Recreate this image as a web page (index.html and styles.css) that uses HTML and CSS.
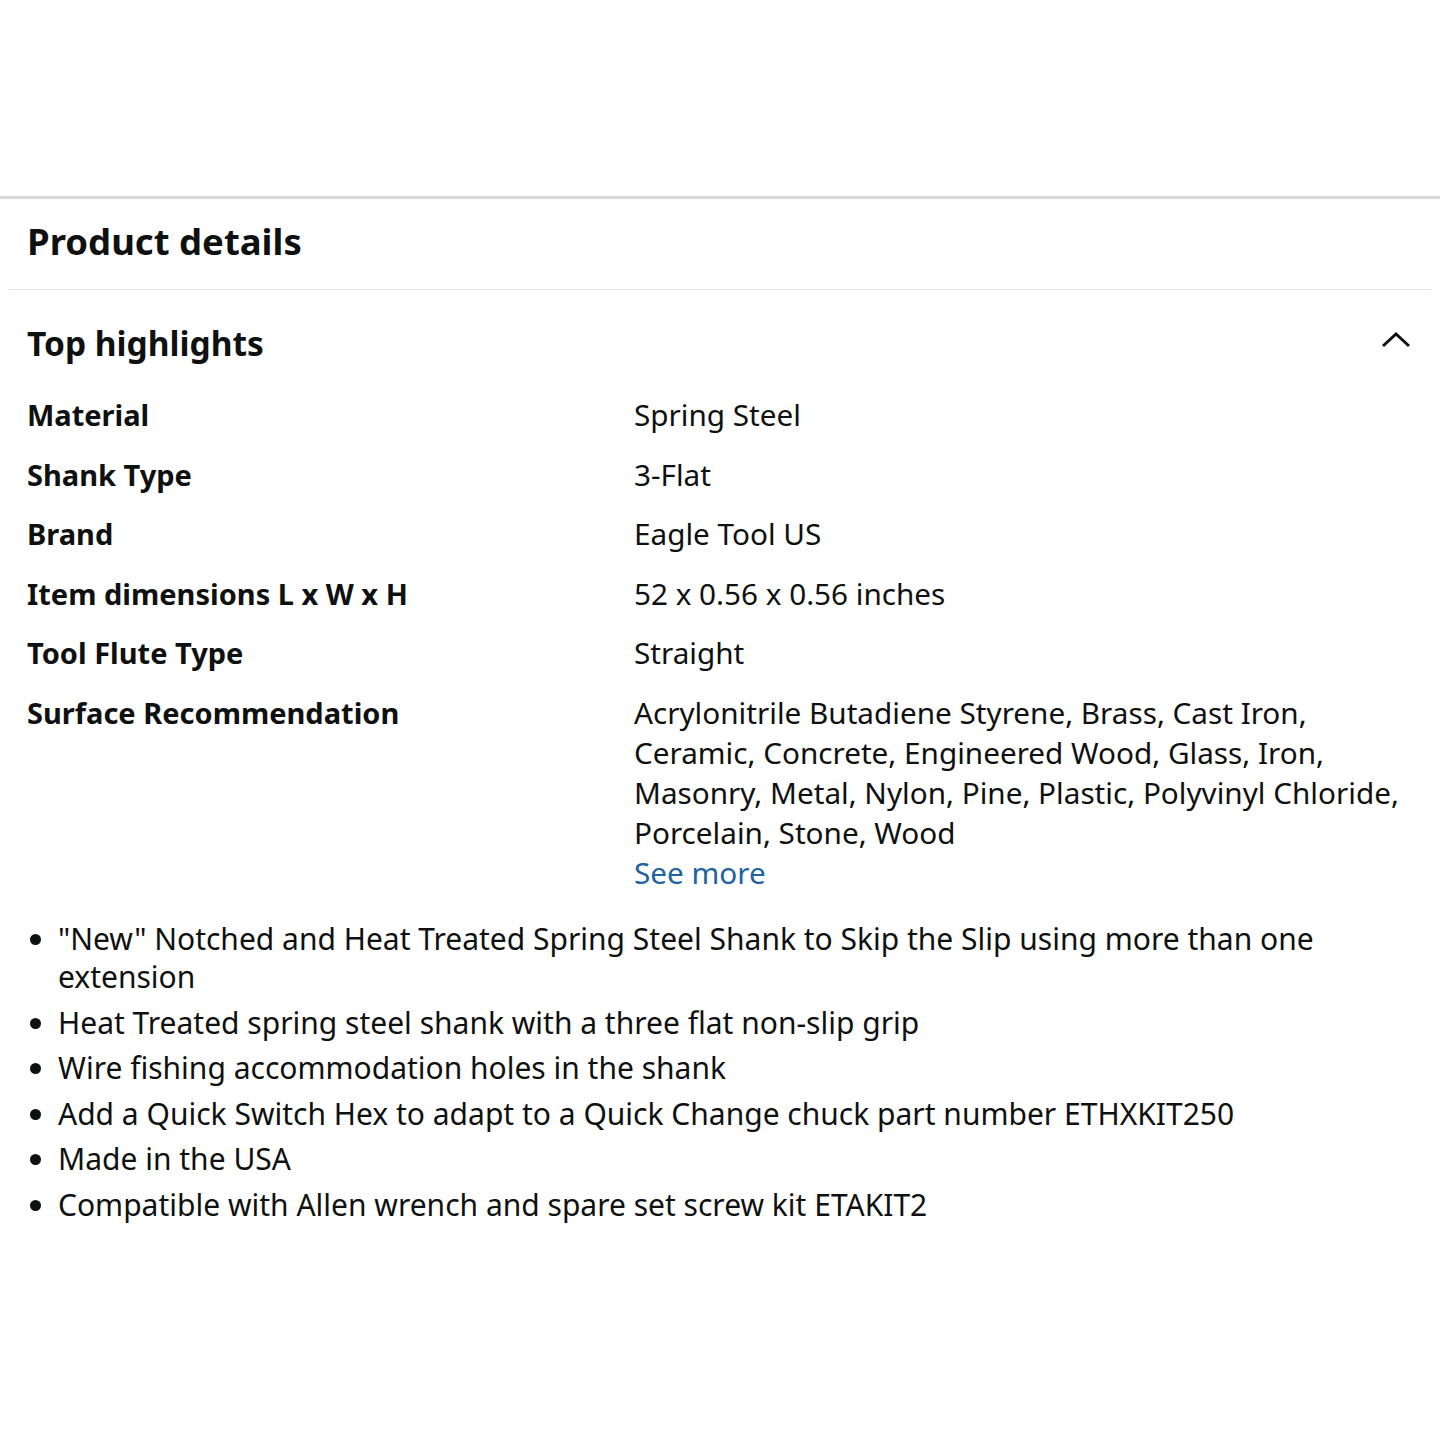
FILE: index.html
```html
<!DOCTYPE html>
<html>
<head>
<meta charset="utf-8">
<link rel="stylesheet" href="styles.css">
</head>
<body>
<div class="top-space"></div>
<div class="section">
  <h1 class="title">Product details</h1>
  <div class="rule"></div>
  <div class="highlights">
    <div class="hl-head">
      <h2 class="subtitle">Top highlights</h2>
      <svg class="chev" width="32" height="20" viewBox="0 0 32 20"><path d="M3 16 L16 4 L29 16" fill="none" stroke="#0f1111" stroke-width="3"/></svg>
    </div>
    <div class="table">
      <div class="row"><div class="label">Material</div><div class="value">Spring Steel</div></div>
      <div class="row"><div class="label">Shank Type</div><div class="value">3-Flat</div></div>
      <div class="row"><div class="label">Brand</div><div class="value">Eagle Tool US</div></div>
      <div class="row"><div class="label">Item dimensions L x W x H</div><div class="value">52 x 0.56 x 0.56 inches</div></div>
      <div class="row"><div class="label">Tool Flute Type</div><div class="value">Straight</div></div>
      <div class="row"><div class="label">Surface Recommendation</div><div class="value multi">Acrylonitrile Butadiene Styrene, Brass, Cast Iron, Ceramic, Concrete, Engineered Wood, Glass, Iron, Masonry, Metal, Nylon, Pine, Plastic, Polyvinyl Chloride, Porcelain, Stone, Wood<br><a class="more">See more</a></div></div>
    </div>
    <ul class="bullets">
      <li>"New" Notched and Heat Treated Spring Steel Shank to Skip the Slip using more than one extension</li>
      <li>Heat Treated spring steel shank with a three flat non-slip grip</li>
      <li>Wire fishing accommodation holes in the shank</li>
      <li>Add a Quick Switch Hex to adapt to a Quick Change chuck part number ETHXKIT250</li>
      <li>Made in the USA</li>
      <li>Compatible with Allen wrench and spare set screw kit ETAKIT2</li>
    </ul>
  </div>
</div>
</body>
</html>
```
FILE: styles.css
```css
* { box-sizing: border-box; }
body {
  margin: 0;
  background: #fff;
  font-family: "Noto Sans", "Open Sans", sans-serif;
  color: #0f1111;
  width: 1440px;
}
.top-space {
  height: 199px;
  border-bottom: 3px solid #d5d9d9;
}
.section { padding: 0 9px; }
.title {
  margin: 0;
  padding: 17px 18px 0;
  height: 90px;
  font-size: 36.5px;
  font-weight: 700;
  line-height: 50px;
}
.rule { height: 1px; background: #e3e6e6; }
.highlights { padding: 0 18px; }
.hl-head {
  display: flex;
  justify-content: space-between;
  align-items: flex-start;
  padding-top: 28px;
  height: 105px;
}
.subtitle {
  margin: 0;
  font-size: 33.5px;
  font-weight: 700;
  line-height: 50px;
}
.chev { margin-top: 12px; margin-right: 1px; }
.row {
  display: grid;
  grid-template-columns: 607px 1fr;
  line-height: 40px;
  padding-bottom: 19.5px;
}
.label { font-weight: 700; font-size: 29px; }
.value { max-width: 790px; font-size: 29.7px; }
.more { color: #2162a1; }
.bullets {
  margin: 8px 0 0;
  padding: 0 0 0 31px;
  font-size: 30px;
  line-height: 38px;
}
.bullets li { margin-bottom: 7.6px; }
```
